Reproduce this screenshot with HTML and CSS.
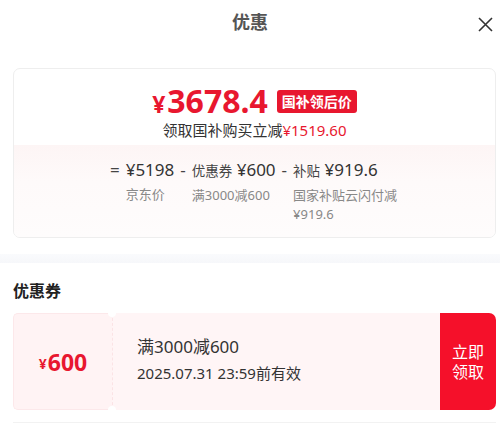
FILE: index.html
```html
<!DOCTYPE html>
<html lang="zh-CN">
<head>
  <meta charset="UTF-8" />
  <title>优惠</title>
  <meta name="viewport" content="width=device-width, initial-scale=1.0"/>
  <link rel="stylesheet" href="styles.css">
</head>
<body>
  <!-- Header -->
  <div class="header">
    <span class="title">优惠</span>
    <span class="close">
      <svg width="15" height="15" viewBox="0 0 15 15"><path d="M1 1 L14 14 M14 1 L1 14" stroke="#333" stroke-width="1.6" fill="none"/></svg>
    </span>
  </div>

  <!-- Price card -->
  <div class="price-card">
    <div class="price-top">
      <div class="price-line">
        <span class="price"><span class="yen">¥</span>3678.4</span>
        <span class="badge">国补领后价</span>
      </div>
      <div class="save-line">领取国补购买立减<span class="red">¥1519.60</span></div>
    </div>
    <div class="price-bottom">
      <div class="formula">
        <span class="op">=</span>
        <div class="col">
          <div class="val">¥5198</div>
          <div class="lbl">京东价</div>
        </div>
        <span class="op">-</span>
        <div class="col">
          <div class="val"><small>优惠券</small> ¥600</div>
          <div class="lbl">满3000减600</div>
        </div>
        <span class="op">-</span>
        <div class="col wide">
          <div class="val"><small>补贴</small> ¥919.6</div>
          <div class="lbl">国家补贴云闪付减 ¥919.6</div>
        </div>
      </div>
    </div>
  </div>

  <div class="gap-band"></div>

  <!-- Coupons -->
  <div class="section-title">优惠券</div>
  <div class="coupon">
    <div class="coupon-amount"><span class="yen-s">¥</span>600</div>
    <div class="coupon-info">
      <div class="coupon-rule">满3000减600</div>
      <div class="coupon-date">2025.07.31 23:59前有效</div>
    </div>
    <div class="coupon-btn">立即<br>领取</div>
  </div>
  <div class="bottom-line"></div>
</body>
</html>
```

FILE: styles.css
```css
body {
  margin: 0;
  background-color: #fff;
  font-family: "Noto Sans", "Noto Sans CJK SC", sans-serif;
  color: #333;
}
.header {
  position: relative;
  height: 44px;
  line-height: 44px;
  text-align: center;
}
.title {
  font-size: 18px;
  font-weight: bold;
  color: #555;
}
.close {
  position: absolute;
  right: 7px;
  top: 17px;
  line-height: 0;
}
.price-card {
  margin: 24px 4px 0 13px;
  border: 1px solid #eeeeee;
  border-radius: 7px;
  overflow: hidden;
}
.price-top {
  height: 76px;
  text-align: center;
  padding-top: 12px;
  box-sizing: border-box;
}
.price-line {
  display: flex;
  justify-content: center;
  align-items: center;
  gap: 9px;
  height: 38px;
}
.price {
  color: #e8172f;
  font-size: 32px;
  font-weight: bold;
}
.yen {
  font-size: 23px;
  margin-right: 2px;
}
.badge {
  background-color: #e8172f;
  color: #fff;
  font-size: 14px;
  font-weight: bold;
  padding: 0 5px;
  height: 23px;
  line-height: 23px;
  border-radius: 3px;
  margin-top: 2px;
}
.save-line {
  font-size: 15px;
  color: #333;
  line-height: 22px;
}
.red {
  color: #e8172f;
}
.price-bottom {
  background: linear-gradient(#fdf5f5, #fefafa 40%, #fefcfc);
  height: 92px;
  padding-top: 12px;
  box-sizing: border-box;
  display: flex;
  justify-content: center;
}
.formula {
  display: flex;
  align-items: flex-start;
  gap: 6px;
}
.op {
  font-size: 17px;
  line-height: 26px;
  color: #444;
}
.col {
  display: flex;
  flex-direction: column;
}
.col.wide {
  width: 106px;
}
.val {
  font-size: 17px;
  line-height: 26px;
  color: #333;
  white-space: nowrap;
}
.val small {
  font-size: 13.5px;
  color: #444;
}
.lbl {
  font-size: 13px;
  line-height: 19px;
  color: #888;
  margin-top: 2px;
}
.gap-band {
  height: 9px;
  margin-top: 16px;
  background: linear-gradient(#fafbfd, #f6f7fa);
}
.section-title {
  margin: 17px 0 0 13px;
  font-size: 16px;
  font-weight: bold;
  color: #222;
  line-height: 22px;
}
.coupon {
  display: flex;
  margin: 11px 4px 0 13px;
  height: 97px;
}
.coupon-amount {
  position: relative;
  width: 99px;
  background-color: #fff3f4;
  border: 1px solid #fce8ea;
  border-right: none;
  box-sizing: border-box;
  border-radius: 5px 0 0 5px;
  color: #e8172f;
  font-size: 23px;
  font-weight: bold;
  display: flex;
  align-items: center;
  justify-content: center;
}
.coupon-amount::before,
.coupon-amount::after {
  content: "";
  position: absolute;
  right: -4px;
  width: 8px;
  height: 8px;
  border-radius: 50%;
  background-color: #fff;
}
.coupon-amount::before {
  top: -5px;
}
.coupon-amount::after {
  bottom: -5px;
}
.yen-s {
  font-size: 14px;
  margin-right: 1px;
  margin-top: 4px;
}
.coupon-info {
  flex: 1;
  background-color: #fff5f6;
  border-left: 1px dashed #fbe3e5;
  padding: 21px 0 0 24px;
}
.coupon-rule {
  font-size: 17px;
  line-height: 26px;
  color: #333;
}
.coupon-date {
  font-size: 15px;
  line-height: 26px;
  color: #333;
}
.coupon-btn {
  width: 56px;
  background-color: #f5102a;
  border-radius: 0 7px 7px 0;
  color: #fff;
  font-size: 16px;
  line-height: 20px;
  display: flex;
  align-items: center;
  justify-content: center;
  text-align: center;
}
.bottom-line {
  margin: 12px 4px 0 13px;
  border-top: 1px solid #f2f2f2;
}
```
